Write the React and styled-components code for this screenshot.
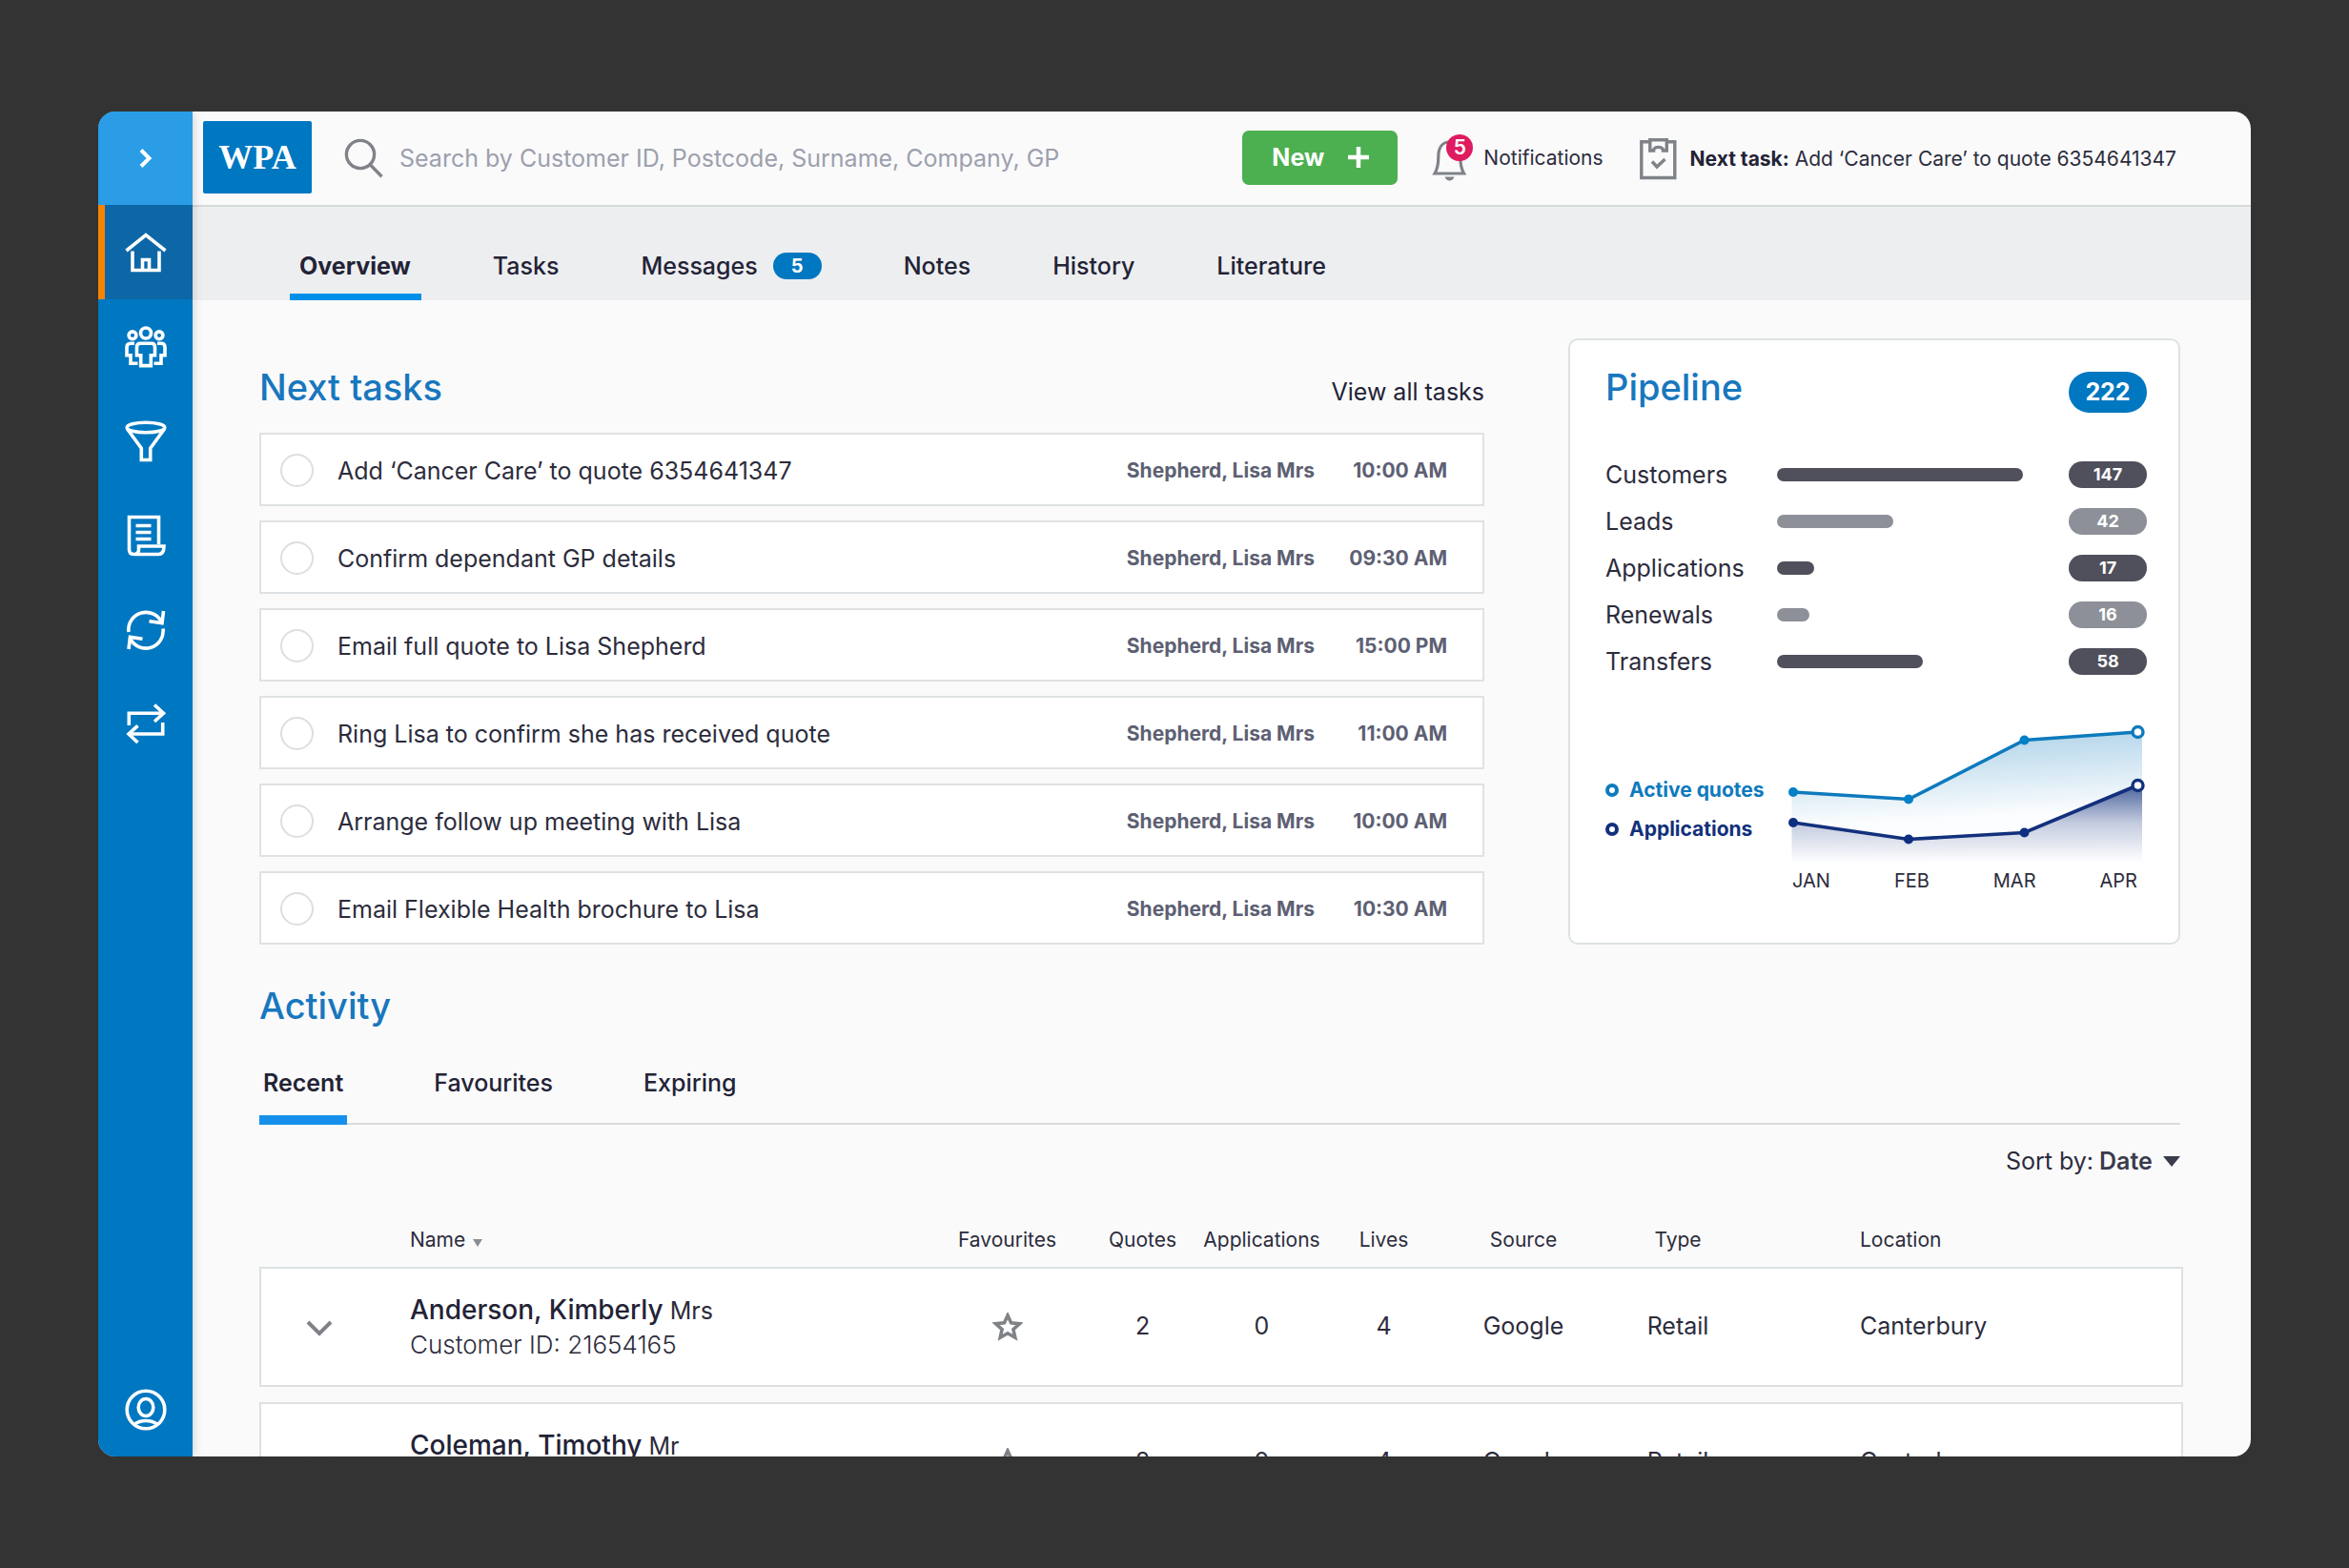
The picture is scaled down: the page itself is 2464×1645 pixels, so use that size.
import { useState } from 'react';
import styled, { createGlobalStyle } from 'styled-components';

const tabs = [
  { name: 'Overview' },
  { name: 'Tasks' },
  { name: 'Messages', count: 5 },
  { name: 'Notes' },
  { name: 'History' },
  { name: 'Literature' },
];

const tasks = [
  { id: 1, title: 'Add ‘Cancer Care’ to quote 6354641347', time: '10:00 AM' },
  { id: 2, title: 'Confirm dependant GP details', time: '09:30 AM' },
  { id: 3, title: 'Email full quote to Lisa Shepherd', time: '15:00 PM' },
  { id: 4, title: 'Ring Lisa to confirm she has received quote', time: '11:00 AM' },
  { id: 5, title: 'Arrange follow up meeting with Lisa', time: '10:00 AM' },
  { id: 6, title: 'Email Flexible Health brochure to Lisa', time: '10:30 AM' },
];

const pipeline = [
  { name: 'Customers', count: 147, width: 258 },
  { name: 'Leads', count: 42, width: 122 },
  { name: 'Applications', count: 17, width: 39 },
  { name: 'Renewals', count: 16, width: 34 },
  { name: 'Transfers', count: 58, width: 153 },
];

const activityTabs = ['Recent', 'Favourites', 'Expiring'];

const customers = [
  { id: '21654165', name: 'Anderson, Kimberly', title: 'Mrs' },
  { id: '21654166', name: 'Coleman, Timothy', title: 'Mr' },
];

const menu = [
  {
    name: 'Home',
    icon: (
      <>
        <path d="M1.5 20 22 3.5 42.5 20" />
        <path d="M8 20.5V40.5H36V20.5" />
        <path d="M18.5 40V29.5H25.5V40" />
      </>
    ),
  },
  {
    name: 'Customers',
    icon: (
      <>
        <circle cx="22" cy="7.5" r="5.5" />
        <circle cx="8" cy="9.8" r="3.9" />
        <circle cx="36" cy="9.8" r="3.9" />
        <path d="M12.5 30.8V22q0-3.7 3.7-3.7h11.6q3.7 0 3.7 3.7v8.8h-4.2v10.8H16.7V30.8z" />
        <path d="M10 18.3H6q-4 0-4 4v8.5h4v8.4h7.5" />
        <path d="M34 18.3h4q4 0 4 4v8.5h-4v8.4h-7.5" />
      </>
    ),
  },
  {
    name: 'Leads',
    icon: (
      <>
        <ellipse cx="22" cy="7.5" rx="19.8" ry="5.3" />
        <path d="M2.5 9 17.3 29.3V41.5h9.4V29.3L41.5 9" />
      </>
    ),
  },
  {
    name: 'Quotes',
    icon: (
      <>
        <path d="M35.5 31V2.5H4.5V36.5q0 5 5 5H35q6 0 6-8.5H14.5v3.5q0 5-5 5" />
        <path d="M11.5 11.5h16M11.5 18.5h16M11.5 25.5h16" />
      </>
    ),
  },
  {
    name: 'Renewals',
    icon: (
      <>
        <path d="M4 24A18.2 18.2 0 0 1 38.8 14.5" />
        <path d="M40 20.5A18.2 18.2 0 0 1 5.2 30" />
        <path d="M40.5 2 39 14.6 25.5 12.8" />
        <path d="M4 42 5.5 29.4 18.5 31.2" />
      </>
    ),
  },
  {
    name: 'Transfers',
    icon: (
      <>
        <path d="M4.3 23V10.3H40.5" />
        <path d="M31 1.5 40.5 10.3 31 19" />
        <path d="M39.7 20V32H4" />
        <path d="M13.5 23.3 4 32 13.5 41" />
      </>
    ),
  },
];

const App = () => {
  const [tab, setTab] = useState('Overview');
  const [activityTab, setActivityTab] = useState('Recent');
  const [doneList, setDoneList] = useState([]);

  const toggleTask = id => {
    setDoneList(prev =>
      prev.includes(id) ? prev.filter(item => item !== id) : [...prev, id]
    );
  };

  return (
    <Page>
      <GlobalStyle />
      <Window>
        <Sidebar>
          <ToggleButton aria-label="Expand menu">
            <svg width="14" height="22" viewBox="0 0 14 22">
              <path d="M2 2.5 10.5 11 2 19.5" fill="none" stroke="#fff" strokeWidth="4" />
            </svg>
          </ToggleButton>
          {menu.map((item, index) => (
            <MenuLink href="#" key={item.name} aria-label={item.name} $active={index === 0}>
              <MenuIcon viewBox="0 0 44 44">{item.icon}</MenuIcon>
            </MenuLink>
          ))}
          <ProfileLink href="#" aria-label="Profile">
            <MenuIcon viewBox="0 0 44 44">
              <circle cx="22" cy="22" r="19.8" />
              <ellipse cx="22" cy="19.5" rx="7.8" ry="9" />
              <path d="M9.5 37.5Q15 33.5 22 33.5T34.5 37.5" />
            </MenuIcon>
          </ProfileLink>
        </Sidebar>

        <Main>
          <Header>
            <Logo href="#">WPA</Logo>
            <SearchForm role="search">
              <svg width="42" height="42" viewBox="0 0 42 42" fill="none" stroke="#7f8287" strokeWidth="3.4">
                <circle cx="17" cy="17" r="14.6" />
                <path d="M27.3 27.8 39.5 40.2" />
              </svg>
              <SearchInput
                aria-label="Search"
                placeholder="Search by Customer ID, Postcode, Surname, Company, GP"
              />
            </SearchForm>
            <NewButton>
              New
              <svg width="22" height="22" viewBox="0 0 22 22">
                <path d="M11 0V22M0 11H22" stroke="#fff" strokeWidth="4.5" />
              </svg>
            </NewButton>
            <NotificationButton>
              <BellWrap>
                <svg width="37" height="44" viewBox="0 0 37 44">
                  <path
                    d="M3 35C6 30 6.8 25 6.8 17.5 6.8 8 11 2 18.3 2S29.8 8 29.8 17.5C29.8 25 30.6 30 33.6 35Z"
                    fill="none"
                    stroke="#7f8287"
                    strokeWidth="3.2"
                  />
                  <path d="M13.5 38.5H23.5Q22 42.5 18.5 42.5T13.5 38.5Z" fill="#7f8287" />
                </svg>
                <BellCount>5</BellCount>
              </BellWrap>
              Notifications
            </NotificationButton>
            <NextTask href="#">
              <svg width="39" height="44" viewBox="0 0 39 44" fill="none" stroke="#7f8287" strokeWidth="3.4">
                <path d="M10.5 3.7H1.8V41.5H36.8V3.7H28.5" />
                <path d="M10.8 13V1.8H28.3V13H24.5C24.5 8.2 14.6 8.2 14.6 13Z" />
                <path d="M13 24.5 18 30 26.5 22" />
              </svg>
              <span>
                <b>Next task:</b> Add ‘Cancer Care’ to quote 6354641347
              </span>
            </NextTask>
          </Header>

          <TabBar>
            {tabs.map(item => (
              <TabButton
                key={item.name}
                $active={tab === item.name}
                onClick={() => setTab(item.name)}
              >
                {item.name}
                {item.count && <TabCount>{item.count}</TabCount>}
              </TabButton>
            ))}
          </TabBar>

          <Content>
            <TopRow>
              <TaskSection>
                <SectionHead>
                  <SectionTitle>Next tasks</SectionTitle>
                  <ViewAll href="#">View all tasks</ViewAll>
                </SectionHead>
                <TaskList>
                  {tasks.map(task => (
                    <TaskItem key={task.id}>
                      <TaskLabel>
                        <TaskCheck
                          type="checkbox"
                          checked={doneList.includes(task.id)}
                          onChange={() => toggleTask(task.id)}
                        />
                        {task.title}
                      </TaskLabel>
                      <TaskCustomer>Shepherd, Lisa Mrs</TaskCustomer>
                      <TaskTime>{task.time}</TaskTime>
                    </TaskItem>
                  ))}
                </TaskList>
              </TaskSection>

              <PipelineCard>
                <SectionHead>
                  <SectionTitle>Pipeline</SectionTitle>
                  <TotalCount>222</TotalCount>
                </SectionHead>
                <PipelineList>
                  {pipeline.map((item, index) => (
                    <PipelineItem key={item.name}>
                      <PipelineName>{item.name}</PipelineName>
                      <Track>
                        <Bar $light={index % 2 === 1} style={{ width: item.width }} />
                      </Track>
                      <PipelineCount $light={index % 2 === 1}>{item.count}</PipelineCount>
                    </PipelineItem>
                  ))}
                </PipelineList>
                <ChartRow>
                  <Legend>
                    <LegendItem $color="#0e7abd">Active quotes</LegendItem>
                    <LegendItem $color="#12307c">Applications</LegendItem>
                  </Legend>
                  <ChartBox>
                    <Chart />
                    <Months>
                      <span>JAN</span>
                      <span>FEB</span>
                      <span>MAR</span>
                      <span>APR</span>
                    </Months>
                  </ChartBox>
                </ChartRow>
              </PipelineCard>
            </TopRow>

            <ActivitySection>
              <SectionTitle>Activity</SectionTitle>
              <ActivityTabs>
                {activityTabs.map(name => (
                  <ActivityTab
                    key={name}
                    $active={activityTab === name}
                    onClick={() => setActivityTab(name)}
                  >
                    {name}
                  </ActivityTab>
                ))}
              </ActivityTabs>
              <SortRow>
                <label htmlFor="sort">Sort by:</label>
                <SortSelect id="sort" defaultValue="Date">
                  <option>Date</option>
                </SortSelect>
                <svg width="18" height="11" viewBox="0 0 18 11">
                  <path d="M0 0H18L9 11Z" fill="#3a3b4c" />
                </svg>
              </SortRow>
              <Table>
                <colgroup>
                  <Col $width={158} />
                  <Col />
                  <Col $width={165} />
                  <Col $width={119} />
                  <Col $width={131} />
                  <Col $width={125} />
                  <Col $width={168} />
                  <Col $width={156} />
                  <Col $width={452} />
                </colgroup>
                <thead>
                  <tr>
                    <Th aria-label="Expand" />
                    <Th $left>
                      Name{' '}
                      <SortMark viewBox="0 0 10 8">
                        <path d="M0 0H10L5 8Z" fill="#8b8d8f" />
                      </SortMark>
                    </Th>
                    <Th>Favourites</Th>
                    <Th>Quotes</Th>
                    <Th>Applications</Th>
                    <Th>Lives</Th>
                    <Th>Source</Th>
                    <Th>Type</Th>
                    <Th $left $indent>
                      Location
                    </Th>
                  </tr>
                </thead>
                <tbody>
                  {customers.map(customer => (
                    <tr key={customer.id}>
                      <Td $left>
                        <ExpandButton aria-label="Expand row">
                          <svg width="28" height="17" viewBox="0 0 28 17">
                            <path d="M2 2 14 14 26 2" fill="none" stroke="#7f8287" strokeWidth="4" />
                          </svg>
                        </ExpandButton>
                      </Td>
                      <Td $left>
                        <CustomerName>
                          <b>{customer.name}</b> {customer.title}
                        </CustomerName>
                        <CustomerId>Customer ID: {customer.id}</CustomerId>
                      </Td>
                      <Td>
                        <IconButton aria-label="Add to favourites">
                          <svg width="32" height="30" viewBox="0 0 32 30">
                            <path
                              d="M16 3 19.6 10.9 28.4 11.8 21.9 17.6 23.8 26.2 16 21.8 8.2 26.2 10.1 17.6 3.6 11.8 12.4 10.9Z"
                              fill="none"
                              stroke="#7f8287"
                              strokeWidth="3.6"
                            />
                          </svg>
                        </IconButton>
                      </Td>
                      <Td>2</Td>
                      <Td>0</Td>
                      <Td>4</Td>
                      <Td>Google</Td>
                      <Td>Retail</Td>
                      <Td $left $indent>
                        Canterbury
                      </Td>
                    </tr>
                  ))}
                </tbody>
              </Table>
            </ActivitySection>
          </Content>
        </Main>
      </Window>
    </Page>
  );
};

const Chart = () => (
  <ChartSvg viewBox="0 0 378 148">
    <defs>
      <linearGradient id="quotes" x1="0.35" y1="0" x2="0.5" y2="1">
        <stop offset="0" stopColor="#0e7abd" stopOpacity="0.34" />
        <stop offset="0.65" stopColor="#0e7abd" stopOpacity="0.02" />
        <stop offset="1" stopColor="#0e7abd" stopOpacity="0" />
      </linearGradient>
      <linearGradient id="apps" x1="0" y1="0" x2="0" y2="1">
        <stop offset="0" stopColor="#12307c" stopOpacity="0.75" />
        <stop offset="0.5" stopColor="#12307c" stopOpacity="0.24" />
        <stop offset="1" stopColor="#12307c" stopOpacity="0" />
      </linearGradient>
    </defs>
    <path d="M5.5 71 128 78.5 249.5 16.5 373 8V145H5.5Z" fill="url(#quotes)" />
    <path d="M5.5 103 128 120.5 249.5 113.5 373 62V145H5.5Z" fill="url(#apps)" />
    <path d="M7 71 128 78.5 249.5 16.5 368 8" fill="none" stroke="#0e7abd" strokeWidth="3.6" />
    <path d="M7 103 128 120.5 249.5 113.5 368 64" fill="none" stroke="#12307c" strokeWidth="3.6" />
    <g fill="#0080c6">
      <circle cx="7" cy="71" r="5" />
      <circle cx="128" cy="78.5" r="5" />
      <circle cx="249.5" cy="16.5" r="5" />
    </g>
    <g fill="#0e2f80">
      <circle cx="7" cy="103" r="5" />
      <circle cx="128" cy="120.5" r="5" />
      <circle cx="249.5" cy="113.5" r="5" />
    </g>
    <circle cx="368.5" cy="8" r="5.5" fill="#fff" stroke="#0e7abd" strokeWidth="3.4" />
    <circle cx="368.5" cy="64" r="5.5" fill="#fff" stroke="#12307c" strokeWidth="3.4" />
  </ChartSvg>
);

const GlobalStyle = createGlobalStyle`
  *, *::before {
    box-sizing: border-box;
  }

  body {
    margin: 0;
    background-color: #333;
    color: #2c2c3c;
    font-family: Inter, 'Liberation Sans', sans-serif;
    font-size: 25px;
  }

  button, input, select {
    padding: 0;
    border: 0;
    background: none;
    color: inherit;
    font: inherit;
  }

  button {
    cursor: pointer;
  }

  a {
    color: inherit;
    text-decoration: none;
  }

  svg {
    display: block;
    flex-shrink: 0;
  }
`;

const Page = styled.div`
  height: 100vh;
  padding: 117px 103px;
`;

const Window = styled.div`
  display: flex;
  height: 100%;
  border-radius: 18px;
  background-color: #fafafb;
  overflow: hidden;
`;

const Sidebar = styled.nav`
  display: flex;
  flex-direction: column;
  flex-shrink: 0;
  width: 99px;
  background-color: #0077c1;
  box-shadow: 0 0 10px rgba(0, 0, 0, 0.2);
  z-index: 1;
`;

const ToggleButton = styled.button`
  display: flex;
  justify-content: center;
  align-items: center;
  height: 98px;
  background-color: #2a9de6;
`;

const MenuLink = styled.a`
  display: flex;
  justify-content: center;
  align-items: center;
  height: 99px;
  background-color: ${({ $active }) => ($active ? '#0d67a7' : 'transparent')};
  box-shadow: ${({ $active }) => ($active ? 'inset 7px 0 #f78300' : 'none')};
`;

const ProfileLink = styled(MenuLink)`
  margin-top: auto;
`;

const MenuIcon = styled.svg`
  width: 44px;
  height: 44px;
  fill: none;
  stroke: #fff;
  stroke-width: 3.6;
`;

const Main = styled.div`
  flex: 1;
  min-width: 0;
`;

const Header = styled.header`
  display: flex;
  align-items: center;
  height: 100px;
  padding: 0 78px 2px 11px;
  border-bottom: 2px solid #d6dadb;
`;

const Logo = styled.a`
  display: flex;
  justify-content: center;
  align-items: center;
  width: 114px;
  height: 76px;
  border-radius: 2px;
  background-color: #0077c1;
  color: #fff;
  font-family: 'Liberation Serif', serif;
  font-size: 36px;
  font-weight: bold;
`;

const SearchForm = styled.form`
  display: flex;
  flex: 1;
  align-items: center;
  margin-left: 34px;
  padding-top: 2px;
  gap: 16px;
`;

const SearchInput = styled.input`
  flex: 1;
  min-width: 0;
  outline: none;

  &::placeholder {
    color: #9ca0ad;
    opacity: 1;
  }
`;

const NewButton = styled.button`
  display: flex;
  justify-content: space-between;
  align-items: center;
  width: 163px;
  height: 57px;
  padding: 0 30px 0 31px;
  border-radius: 7px;
  background-color: #4caf50;
  color: #fff;
  font-weight: 700;
`;

const NotificationButton = styled.button`
  display: flex;
  align-items: center;
  margin-left: 36px;
  gap: 17px;
  font-size: 21px;
`;

const BellWrap = styled.span`
  position: relative;
  padding-top: 8px;
`;

const BellCount = styled.span`
  position: absolute;
  top: 2px;
  right: -6px;
  width: 28px;
  height: 28px;
  border-radius: 50%;
  background-color: #e01a5e;
  color: #fff;
  font-size: 21px;
  font-weight: 600;
  line-height: 28px;
  text-align: center;
`;

const NextTask = styled.a`
  display: flex;
  align-items: center;
  margin-left: 38px;
  padding-top: 3px;
  gap: 14px;
  font-size: 21px;

  b {
    color: #232336;
  }
`;

const TabBar = styled.nav`
  display: flex;
  align-items: flex-end;
  height: 98px;
  padding-left: 102px;
  gap: 65px;
  background-color: #edeef0;
`;

const TabButton = styled.button`
  display: flex;
  align-items: center;
  height: 72px;
  padding: 0 11px 0 10px;
  border-top: 7px solid transparent;
  border-bottom: 7px solid ${({ $active }) => ($active ? '#008fe8' : 'transparent')};
  color: #232336;
  font-weight: ${({ $active }) => ($active ? 700 : 500)};
`;

const TabCount = styled.span`
  width: 51px;
  margin-left: 16px;
  border-radius: 14px;
  background-color: #0077c1;
  color: #fff;
  font-size: 20px;
  font-weight: 700;
  line-height: 28px;
`;

const Content = styled.main`
  padding: 40px 74px 0 70px;
`;

const TopRow = styled.div`
  display: flex;
  align-items: flex-start;
  gap: 88px;
`;

const TaskSection = styled.section`
  flex: 1;
  padding-top: 28px;
`;

const SectionHead = styled.div`
  display: flex;
  justify-content: space-between;
  align-items: baseline;
`;

const SectionTitle = styled.h2`
  margin: 0;
  color: #1877bd;
  font-size: 38px;
  font-weight: 500;
  line-height: 46px;
`;

const ViewAll = styled.a`
  color: #232336;
`;

const TaskList = styled.ul`
  display: flex;
  flex-direction: column;
  margin: 25px 0 0;
  padding: 0;
  gap: 15px;
  list-style: none;
`;

const TaskItem = styled.li`
  display: flex;
  align-items: center;
  height: 77px;
  padding: 2px 37px 0 20px;
  border: 2px solid #dfe2e4;
  background-color: #fff;
`;

const TaskLabel = styled.label`
  display: flex;
  flex: 1;
  align-items: center;
  gap: 25px;
`;

const TaskCheck = styled.input`
  width: 35px;
  height: 35px;
  margin: 0;
  border: 2px solid #dddedf;
  border-radius: 50%;
  appearance: none;

  &:checked {
    background-color: #008fe8;
  }
`;

const TaskCustomer = styled.span`
  color: #5d6073;
  font-size: 21px;
  font-weight: 700;
`;

const TaskTime = styled(TaskCustomer)`
  width: 139px;
  text-align: right;
`;

const PipelineCard = styled.section`
  width: 642px;
  height: 636px;
  padding: 26px 33px 0 37px;
  border: 2px solid #dde2e2;
  border-radius: 10px;
  background-color: #fff;
`;

const TotalCount = styled.span`
  width: 82px;
  border-radius: 22px;
  background-color: #0077c1;
  color: #fff;
  font-weight: 700;
  line-height: 43px;
  text-align: center;
`;

const PipelineList = styled.ul`
  display: flex;
  flex-direction: column;
  margin: 51px 0 0;
  padding: 0;
  gap: 21px;
  list-style: none;
`;

const PipelineItem = styled.li`
  display: flex;
  align-items: center;
  line-height: 28px;
`;

const PipelineName = styled.span`
  width: 180px;
`;

const Track = styled.span`
  flex: 1;
`;

const Bar = styled.span`
  display: block;
  height: 14px;
  border-radius: 7px;
  background-color: ${({ $light }) => ($light ? '#8d9098' : '#4f505c')};
`;

const PipelineCount = styled.span`
  width: 82px;
  border-radius: 14px;
  background-color: ${({ $light }) => ($light ? '#8d9098' : '#4f505c')};
  color: #fff;
  font-size: 18px;
  font-weight: 700;
  text-align: center;
`;

const ChartRow = styled.div`
  display: flex;
  justify-content: space-between;
  margin-top: 52px;
`;

const Legend = styled.ul`
  display: flex;
  flex-direction: column;
  margin: 56px 0 0;
  padding: 0;
  gap: 15px;
  list-style: none;
`;

const LegendItem = styled.li`
  display: flex;
  align-items: center;
  gap: 11px;
  color: ${({ $color }) => $color};
  font-size: 21px;
  font-weight: 700;
  line-height: 26px;

  &::before {
    content: '';
    width: 14px;
    height: 14px;
    border: 4px solid ${({ $color }) => $color};
    border-radius: 50%;
  }
`;

const ChartBox = styled.div`
  width: 378px;
`;

const ChartSvg = styled.svg`
  width: 378px;
  height: 148px;
`;

const Months = styled.div`
  display: flex;
  justify-content: space-between;
  padding: 4px 10px 0 6px;
  font-size: 20px;
`;

const ActivitySection = styled.section`
  margin-top: 41px;
`;

const ActivityTabs = styled.div`
  display: flex;
  height: 86px;
  margin-top: 16px;
  gap: 87px;
  border-bottom: 2px solid #dadbdc;
`;

const ActivityTab = styled.button`
  height: 86px;
  padding: 0 4px;
  border-top: 8px solid transparent;
  border-bottom: 10px solid ${({ $active }) => ($active ? '#1690ea' : 'transparent')};
  color: #232336;
  font-weight: ${({ $active }) => ($active ? 600 : 500)};
`;

const SortRow = styled.div`
  display: flex;
  justify-content: flex-end;
  align-items: center;
  margin-top: 23px;
  line-height: 30px;
`;

const SortSelect = styled.select`
  margin: 0 11px 0 6px;
  color: #3a3b4c;
  font-weight: 600;
  appearance: none;
`;

const Table = styled.table`
  width: calc(100% + 3px);
  margin-top: 40px;
  border-collapse: separate;
  border-spacing: 0 16px;
  table-layout: fixed;
`;

const Col = styled.col`
  width: ${({ $width }) => ($width ? `${$width}px` : 'auto')};
`;

const Th = styled.th`
  padding: 0 0 0 ${({ $indent }) => ($indent ? '113px' : '0')};
  font-size: 21px;
  font-weight: 400;
  line-height: 24px;
  text-align: ${({ $left }) => ($left ? 'left' : 'center')};
`;

const SortMark = styled.svg`
  display: inline-block;
  width: 10px;
  height: 8px;
  margin-left: 2px;
`;

const Td = styled.td`
  height: 126px;
  padding: 0 0 2px ${({ $indent }) => ($indent ? '113px' : '0')};
  border-top: 2px solid #dde1e4;
  border-bottom: 2px solid #dde1e4;
  background-color: #fff;
  text-align: ${({ $left }) => ($left ? 'left' : 'center')};

  &:first-child {
    border-left: 2px solid #dde1e4;
  }

  &:last-child {
    border-right: 2px solid #dde1e4;
  }
`;

const IconButton = styled.button`
  vertical-align: middle;
`;

const ExpandButton = styled(IconButton)`
  margin-left: 47px;
`;

const CustomerName = styled.div`
  padding-top: 2px;
  line-height: 36px;

  b {
    color: #232336;
    font-size: 28px;
    font-weight: 500;
  }
`;

const CustomerId = styled.div`
  font-size: 26px;
  font-weight: 300;
  line-height: 36px;
`;

export default App;
